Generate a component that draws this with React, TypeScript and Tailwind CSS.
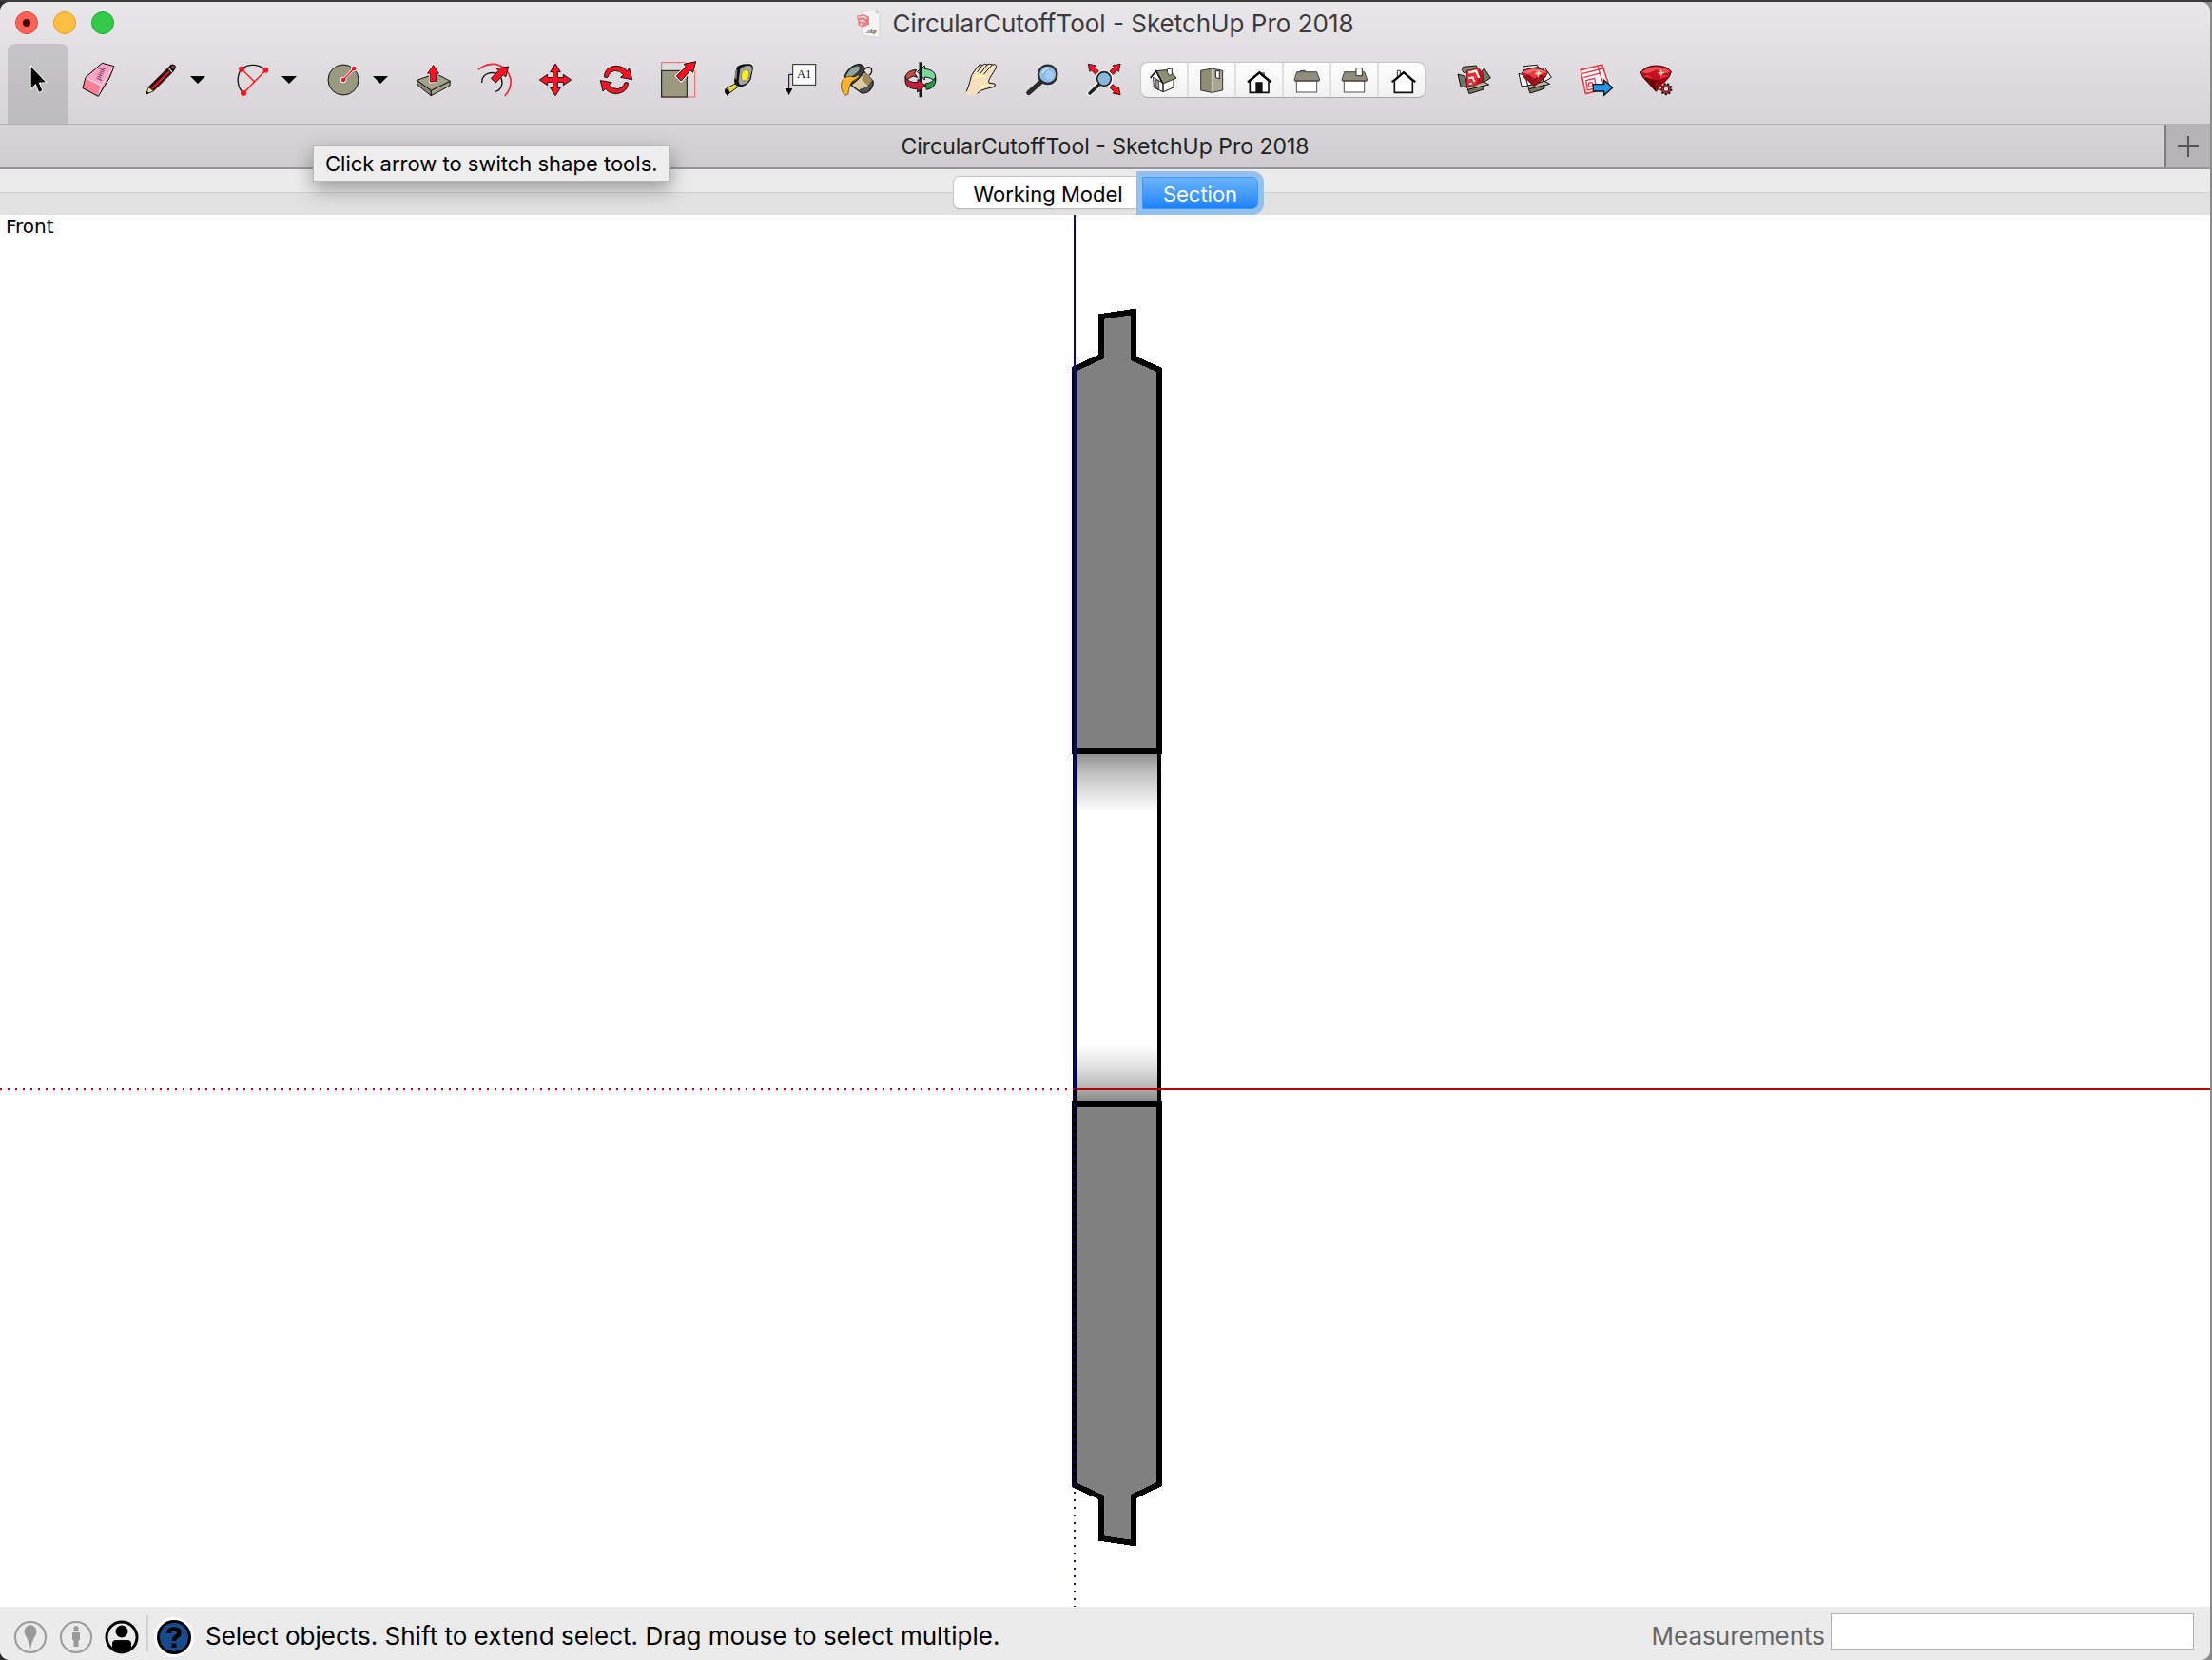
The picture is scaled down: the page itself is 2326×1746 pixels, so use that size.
import React from 'react';

type IconProps = { box: string; size?: string; children: React.ReactNode };

const Icon: React.FC<IconProps> = ({ box, size = 'h-10 w-10', children }) => (
    <svg viewBox={box} className={`${size} shrink-0`} aria-hidden="true">
        {children}
    </svg>
);

const HEAD = 'M0 -50 L17 -24 L9 -24 L9 0 L-9 0 L-9 -24 L-17 -24 Z';

const CursorIcon = () => (
    <Icon box="60 192 120 120">
        <path d="M98 211 V278 L113 264 L123 290 L133 286 L122 260 L144 259 Z" fill="#000" stroke="#fff" strokeWidth="5" paintOrder="stroke" />
    </Icon>
);

const EraserIcon = () => (
    <Icon box="252 192 120 120">
        <path d="M322 199 L360 209 L320 270 L270 246 Z" fill="#fba6c6" />
        <path d="M270 246 L320 270 L310 304 L261 278 Z" fill="#ff7f96" />
        <path d="M360 209 L345 246 L310 304 L320 270 Z" fill="#f9899f" />
        <path d="M270 246 L320 270 L360 209 M320 270 L311 302" fill="none" stroke="#fff" strokeWidth="3" />
        <path d="M322 199 L360 209 L345 246 L310 304 L261 278 L270 244 Z" fill="none" stroke="#000" strokeWidth="3" strokeLinejoin="round" />
        <text transform="translate(314 254) rotate(-63)" fontSize="24" fontFamily="Liberation Serif, serif" fill="#402040">pink</text>
    </Icon>
);

const PencilIcon = () => (
    <Icon box="444 192 120 120">
        <path d="M459 299 L468 274 L533 210 Q540 200 549 204 Q558 208 553 217 L548 225 L484 289 Z" fill="#111" />
        <path d="M462 295 L470 277 L483 287 Z" fill="#dfe3a8" />
        <path d="M459 299 L464 288 L470 294 Z" fill="#000" />
        <path d="M479 280 L534 226" stroke="#f5102a" strokeWidth="6" />
        <path d="M475 273 L529 219 M486 285 L541 231" stroke="#8d1420" strokeWidth="2" />
        <path d="M533 217 L543 227" stroke="#ddd" strokeWidth="4" />
        <circle cx="546" cy="212" r="5" fill="#b8374a" />
    </Icon>
);

const ArcIcon = () => (
    <Icon box="732 192 120 120">
        <path d="M768 294 A58 58 0 0 1 762 218 A58 58 0 0 1 838 221" fill="none" stroke="#111" strokeWidth="4" />
        <path d="M768 294 L838 221 M762 218 L803 258" stroke="#ff1024" strokeWidth="4" />
        <circle cx="762" cy="218" r="9" fill="#ff1024" />
        <circle cx="838" cy="221" r="9" fill="#ff1024" />
        <circle cx="768" cy="294" r="9" fill="#ff1024" />
    </Icon>
);

const CircleIcon = () => (
    <Icon box="1020 192 120 120">
        <circle cx="1083" cy="252" r="48" fill="#9b9980" stroke="#111" strokeWidth="3" />
        <path d="M1083 252 L1117 216" stroke="#fff" strokeWidth="8" />
        <circle cx="1083" cy="252" r="10" fill="#fff" />
        <circle cx="1117" cy="216" r="10" fill="#fff" />
        <path d="M1083 252 L1117 216" stroke="#ff1024" strokeWidth="4" />
        <circle cx="1083" cy="252" r="7" fill="#ff1024" />
        <circle cx="1117" cy="216" r="7" fill="#ff1024" />
    </Icon>
);

const PushPullIcon = () => (
    <Icon box="48 102 120 120">
        <g stroke="#111" strokeWidth="3" strokeLinejoin="round">
            <path d="M55 163 L100 196 L160 166 L116 142 Z" fill="#a3a18a" />
            <path d="M55 163 L100 196 V212 L57 178 Z" fill="#8c8a72" />
            <path d="M160 166 L100 196 V212 L159 180 Z" fill="#a3a18a" />
        </g>
        <path d="M107 115 L125 142 H116 V168 H97 V142 H88 Z" fill="#ff1024" stroke="#fff" strokeWidth="7" paintOrder="stroke" />
        <path d="M107 115 L125 142 H116 V168 H97 V142 H88 Z" fill="#ff1024" stroke="#111" strokeWidth="2" />
    </Icon>
);

const OffsetIcon = () => (
    <Icon box="240 102 120 120">
        <path d="M249 130 Q275 108 305 113 Q340 120 351 160 Q354 190 332 213" fill="none" stroke="#f5233b" strokeWidth="5" />
        <path d="M260 171 Q260 142 292 139 Q324 142 324 172 Q321 196 301 200" fill="none" stroke="#111" strokeWidth="4" />
        <path d="M344 120 L335 153 L328 146 L304 171 L289 157 L313 133 L307 126 Z" fill="#ff1024" stroke="#111" strokeWidth="3" />
    </Icon>
);

const MoveIcon = () => (
    <Icon box="432 102 120 120">
        <path
            d="M492 111 L508 137 H499 V155 H517 V145 L542 162 L517 179 V169 H499 V187 H508 L492 212 L476 187 H485 V169 H467 V179 L442 162 L467 145 V155 H485 V137 H476 Z"
            fill="#ff1024"
            stroke="#111"
            strokeWidth="3"
        />
    </Icon>
);

const RotateIcon = () => (
    <Icon box="624 102 120 120">
        <g fill="#ff1024" stroke="#111" strokeWidth="3" strokeLinejoin="round">
            <path d="M646 152 Q648 120 684 118 Q708 119 718 135 L725 125 L734 161 L698 154 L707 146 Q695 132 680 133 Q663 136 657 153 Q650 157 646 152 Z" />
            <path d="M722 172 Q719 203 684 206 Q660 204 650 190 L642 198 L634 164 L670 170 L661 178 Q672 191 688 191 Q705 188 711 171 Q718 168 722 172 Z" />
        </g>
    </Icon>
);

const ScaleIcon = () => (
    <Icon box="816 102 120 120">
        <rect x="827" y="107" width="105" height="109" fill="none" stroke="#f0616f" strokeWidth="3" />
        <rect x="827" y="133" width="80" height="83" fill="#9b9980" stroke="#111" strokeWidth="3" />
        <path d="M935 104 L926 139 L918 132 L889 165 L874 150 L904 120 L897 112 Z" fill="#ff1024" stroke="#fff" strokeWidth="8" paintOrder="stroke" />
        <path d="M935 104 L926 139 L918 132 L889 165 L874 150 L904 120 L897 112 Z" fill="#ff1024" stroke="#111" strokeWidth="3" />
    </Icon>
);

const TapeIcon = () => (
    <Icon box="1008 102 120 120">
        <path d="M1027 192 L1064 171 L1071 182 L1036 207 Z" fill="#e8dc2c" stroke="#111" strokeWidth="3" />
        <path d="M1026 194 L1038 190 L1042 203 L1034 212 L1027 203 Z" fill="#000" />
        <path d="M1064 122 Q1075 109 1105 112 Q1118 115 1115 130 L1109 160 Q1098 182 1076 184 Q1058 184 1056 165 Z" fill="#111" />
        <path d="M1075 128 Q1085 116 1104 117 Q1114 119 1112 132 L1105 160 Q1096 176 1080 178 Q1070 178 1070 165 Z" fill="#a4a4a4" />
        <path d="M1059 134 L1066 130 L1064 160 L1058 158 Z" fill="#777" />
        <ellipse cx="1091" cy="147" rx="12" ry="18" transform="rotate(18 1091 147)" fill="#ffee21" stroke="#777" strokeWidth="2" />
    </Icon>
);

const TextIcon = () => (
    <Icon box="60 192 120 120">
        <rect x="101" y="203" width="72" height="65" fill="#fff" stroke="#222" strokeWidth="3" />
        <text x="137" y="245" textAnchor="middle" fontSize="38" fontFamily="Liberation Serif, serif" fill="#111">A1</text>
        <path d="M101 235 H89 V282" fill="none" stroke="#000" strokeWidth="3" />
        <path d="M78 279 H100 L89 300 Z" fill="#000" />
    </Icon>
);

const PaintIcon = () => (
    <Icon box="252 192 120 120">
        <path d="M322 222 Q340 206 349 216 Q353 230 342 238" fill="none" stroke="#111" strokeWidth="4" />
        <path d="M327 227 L354 256 Q356 270 346 282 Q334 296 318 293 L284 268 Z" fill="#d9cda2" stroke="#111" strokeWidth="4" />
        <path d="M330 228 L354 256 L348 280 L318 251 Z" fill="#a2895d" />
        <path d="M313 282 Q335 282 353 254 Q356 270 344 284 Q334 296 318 294 Z" fill="#555" stroke="#111" strokeWidth="2" />
        <path d="M264 240 Q280 204 312 202 Q334 208 324 228 Q308 256 283 267 Q262 262 264 240 Z" fill="#3b3b3b" stroke="#111" strokeWidth="3" />
        <path d="M268 238 Q284 208 307 207 Q318 212 308 226 Q292 244 270 246 Z" fill="#90a69c" stroke="#111" strokeWidth="2" />
        <path d="M255 260 Q262 240 283 241 Q298 246 305 237 L312 240 Q300 252 288 257 Q279 268 275 298 Q266 305 260 294 Q250 278 255 260 Z" fill="#ffb52b" stroke="#3c2a00" strokeWidth="2" />
    </Icon>
);

const OrbitIcon = () => (
    <Icon box="444 192 120 120">
        <g stroke="#111" strokeWidth="3" strokeLinejoin="round">
            <path d="M456 242 Q462 222 491 220 L485 232 L494 244 L481 240 Q467 244 460 256 Z" fill="#c84a45" />
            <path d="M494 226 L517 207 V217 Q548 220 551 240 V258 Q540 244 517 243 V252 Z" fill="#7ad79a" />
            <path d="M551 243 V258 Q548 278 523 283 L519 264 Q542 262 551 243 Z" fill="#2b9a48" />
        </g>
        <path d="M504 196 V307" stroke="#1a1a1a" strokeWidth="9" />
        <path d="M456 242 Q464 262 495 260 V250 L519 270 L494 291 V281 Q458 280 456 258 Z" fill="#c41e3a" stroke="#111" strokeWidth="3" strokeLinejoin="round" />
    </Icon>
);

const PanIcon = () => (
    <Icon box="636 192 120 120">
        <path
            d="M648 291 Q656 273 660 256 Q663 236 673 225 L687 207 Q693 200 698 206 Q707 198 714 204 Q721 199 730 204 Q734 201 733 208 Q742 203 743 209 Q744 214 726 240 Q716 256 720 262 L738 264 Q744 271 732 275 L708 281 Q694 284 684 294 Q670 304 655 299 Q646 298 648 291 Z"
            fill="#f4dfbe"
        />
        <path d="M676 232 Q690 236 708 236 Q712 246 700 244 Q684 242 672 250 Z M690 276 Q704 258 716 268 Q712 278 690 282 Z" fill="#fbf6b6" />
        <path
            d="M649 288 Q656 273 660 256 Q663 236 673 225 L687 207 Q693 200 698 206 L684 226 M698 206 Q707 198 714 204 L694 230 M714 204 Q721 199 730 204 L704 234 M730 204 Q742 201 743 209 Q744 214 726 240 Q716 256 720 262 L738 264 Q744 271 732 275 L708 281 Q694 284 684 294"
            fill="none"
            stroke="#111"
            strokeWidth="3"
            strokeLinecap="round"
        />
    </Icon>
);

const ZoomIcon = () => (
    <Icon box="828 192 120 120">
        <path d="M845 293 L882 260" stroke="#2b2b2b" strokeWidth="15" strokeLinecap="round" />
        <circle cx="905" cy="235" r="29" fill="#8dbbe8" stroke="#2a2a2a" strokeWidth="7" />
        <circle cx="911" cy="237" r="14" fill="#a4cdf5" />
        <path d="M888 232 Q892 218 905 216" fill="none" stroke="#d5e8f8" strokeWidth="4" />
    </Icon>
);

const ZoomExtentsIcon = () => (
    <Icon box="1020 192 120 120">
        <g fill="#ff1024" stroke="#111" strokeWidth="3">
            <path d={HEAD} transform="translate(1061 230) rotate(-45) scale(0.8)" />
            <path d={HEAD} transform="translate(1106 230) rotate(45) scale(0.8)" />
            <path d={HEAD} transform="translate(1106 271) rotate(135) scale(0.8)" />
        </g>
        <path d="M1038 294 L1066 268" stroke="#fff" strokeWidth="17" strokeLinecap="round" />
        <circle cx="1083" cy="249" r="28" fill="#fff" />
        <path d="M1038 294 L1066 268" stroke="#222" strokeWidth="11" strokeLinecap="round" />
        <circle cx="1083" cy="249" r="22" fill="#8ab6da" stroke="#222" strokeWidth="5" />
    </Icon>
);

const BoxBase = ({ light }: { light?: boolean }) => (
    <g stroke="#111" strokeWidth="3" strokeLinejoin="round">
        <path d="M172 101 L176 91 L217 87 L222 98 L178 110 Z" fill={light ? '#f4f4f2' : '#8b8a76'} />
        <path d="M159 114 L182 121 L190 154 L168 154 Z" fill={light ? '#f4f4f2' : '#77765f'} />
        <path d="M232 108 L242 96 L262 126 L240 140 Z" fill={light ? '#f4f4f2' : '#77765f'} />
        <path d="M184 153 L240 138 L257 147 L194 164 Z" fill="#b5b39d" />
        <path d="M190 163 L240 151 V162 L195 176 Z" fill="#77765f" />
        {light && <path d="M174 103 L221 93 L240 138 L188 152 Z" fill="#fff" />}
    </g>
);

const WarehouseIcon = () => (
    <Icon box="150 72 120 120">
        <BoxBase />
        <path d="M187 103 L224 95 L238 112 L238 136 L212 150 L187 152 Z" fill="#ee2a36" stroke="#8b0d16" strokeWidth="3" />
        <path d="M226 98 L238 112 V136 L218 146 Z" fill="#b3111f" />
        <path d="M193 109 L216 104 L226 126" fill="none" stroke="#fff" strokeWidth="7" />
        <path d="M193 127 L206 124 L211 138 M195 145 L203 143" fill="none" stroke="#fff" strokeWidth="6" />
    </Icon>
);

const ExtensionIcon = () => (
    <Icon box="342 72 120 120">
        <g transform="translate(192 -2)">
            <BoxBase light />
        </g>
        <path d="M361 109 Q372 97 400 96 Q430 96 442 109 L434 124 L400 152 L368 124 Z" fill="#dc1422" stroke="#4e0008" strokeWidth="3" />
        <path d="M362 108 Q400 86 441 108 L422 114 L400 105 L380 114 Z" fill="#f16b6f" />
        <path d="M368 124 L380 114 L400 128 L422 114 L434 124 L400 152 Z" fill="#98101b" />
        <path d="M380 114 L400 105 L422 114 L400 128 Z" fill="#e63a42" />
        <path d="M412 100 L416 109 L424 112 L416 116 L412 126 L409 116 L400 112 L409 109 Z" fill="#fbd5b4" />
    </Icon>
);

const LayoutIcon = () => (
    <Icon box="534 72 120 120">
        <path d="M541 99 L616 79 L645 152 L559 181 Z" fill="#fff" />
        <path d="M546 101 L614 84 L638 156 L562 176 Z" fill="#fff" stroke="#ee3440" strokeWidth="5" />
        <path d="M552 112 L616 96 M600 90 L620 150" stroke="#ee3440" strokeWidth="4" />
        <path d="M556 124 L612 110" stroke="#ee3440" strokeWidth="4" />
        <path d="M563 134 L590 127 L596 158 L568 165 Z" fill="#fff" stroke="#ee3440" strokeWidth="4" />
        <circle cx="578" cy="147" r="7" fill="#fff" stroke="#ee3440" strokeWidth="4" />
        <path d="M586 146 H620 V133 L647 157 L620 181 V168 H586 Z" fill="#2196f3" stroke="#111" strokeWidth="4" />
    </Icon>
);

const RubyIcon = () => (
    <Icon box="726 72 120 120">
        <path d="M736 108 Q750 88 784 87 Q820 88 832 106 L826 122 L784 169 L742 122 Z" fill="#c9121f" stroke="#2c0004" strokeWidth="3" />
        <path d="M738 108 Q784 74 830 106 L810 112 L785 100 L758 112 Z" fill="#ee4e55" />
        <path d="M742 121 L758 112 L784 128 L810 112 L827 120 L785 134 Z" fill="#f0222f" />
        <path d="M742 122 L784 132 L784 168 Z" fill="#6c0009" />
        <path d="M826 122 L784 132 L784 168 Z" fill="#99000d" />
        <path d="M742 121 L758 112 L784 130 L810 112 L827 120" fill="none" stroke="#5a0007" strokeWidth="2" />
        <path d="M799 98 L804 107 L812 110 L804 114 L800 123 L797 114 L788 110 L797 107 Z" fill="#f8c7a0" />
        <circle cx="816" cy="161" r="20" fill="#dedde0" />
        <circle cx="816" cy="161" r="16" fill="none" stroke="#111" strokeWidth="7" strokeDasharray="6 5" />
        <circle cx="816" cy="161" r="11" fill="#dedde0" stroke="#111" strokeWidth="9" />
        <circle cx="816" cy="161" r="11" fill="none" stroke="#e3222f" strokeWidth="5" />
    </Icon>
);

const view = 'h-9 w-9';

const IsoIcon = () => (
    <Icon box="78 198 108 108" size={view}>
        <path d="M98 244 L129 262 V290 L100 276 Z M129 262 L162 244 V276 L129 290 Z" fill="#fff" stroke="#222" strokeWidth="3" />
        <path d="M105 252 L116 257 V282 L105 277 Z" fill="#999" stroke="#111" strokeWidth="2" />
        <path d="M107 224 L148 220 L171 246 L128 264 Z" fill="#8f8d74" stroke="#222" strokeWidth="3" />
        <path d="M89 246 L107 224 L128 263" fill="none" stroke="#111" strokeWidth="5" />
        <path d="M142 218 L157 216 V236 L149 238 L142 229 Z" fill="#fff" stroke="#333" strokeWidth="3" />
    </Icon>
);

const TopIcon = () => (
    <Icon box="231 198 108 108" size={view}>
        <path d="M251 223 L286 216 V292 L251 285 Z" fill="#8f8d74" />
        <path d="M286 216 L320 223 V285 L286 292 Z" fill="#a9a791" />
        <path d="M286 217 V291" stroke="#c9c7b4" strokeWidth="3" />
        <path d="M251 223 L286 216 L320 223 V285 L286 292 L251 285 Z" fill="none" stroke="#333" strokeWidth="3" />
        <path d="M298 224 H310 V249 L298 244 Z" fill="#fff" stroke="#222" strokeWidth="3" />
    </Icon>
);

const FrontIcon = () => (
    <Icon box="381 198 108 108" size={view}>
        <path d="M442 230 H451 V240 L442 236 Z" fill="#888" stroke="#222" strokeWidth="2" />
        <path d="M436 230 L465 255 V292 H406 V255 Z" fill="#fff" stroke="#111" strokeWidth="5" />
        <path d="M424 292 V259 H446 V292 Z" fill="#111" />
        <path d="M399 259 L436 229 L473 259" fill="none" stroke="#000" strokeWidth="7" />
    </Icon>
);

const SideHouse = ({ chimney }: { chimney: React.ReactNode }) => (
    <>
        <rect x="553" y="254" width="64" height="37" fill="#fff" stroke="#555" strokeWidth="3" />
        <path d="M554 227 H617 L626 252 Q626 255 622 255 H550 Q546 255 546 252 Z" fill="#8f8d7b" stroke="#444" strokeWidth="3" />
        <path d="M548 255 H624" stroke="#5d3a38" strokeWidth="3" />
        {chimney}
    </>
);

const RightIcon = () => (
    <Icon box="531 198 108 108" size={view}>
        <SideHouse chimney={<path d="M566 226 V223 H580 V226" fill="#aaa" stroke="#333" strokeWidth="3" />} />
    </Icon>
);

const LeftIcon = () => (
    <Icon box="531 198 108 108" size={view}>
        <SideHouse chimney={<rect x="591" y="215" width="19" height="24" fill="#fff" stroke="#333" strokeWidth="3" />} />
    </Icon>
);

const BackIcon = () => (
    <Icon box="831 198 108 108" size={view}>
        <path d="M871 240 V223 H880 V236" fill="#fff" stroke="#333" strokeWidth="3" />
        <path d="M891 229 L919 255 V292 H862 V255 Z" fill="#fff" stroke="#111" strokeWidth="5" />
        <path d="M854 259 L891 228 L928 259" fill="none" stroke="#000" strokeWidth="6" />
    </Icon>
);

const tools: { label: string; icon: React.FC; menu?: boolean; active?: boolean }[] = [
    { label: 'Select', icon: CursorIcon, active: true },
    { label: 'Eraser', icon: EraserIcon },
    { label: 'Lines', icon: PencilIcon, menu: true },
    { label: 'Arcs', icon: ArcIcon, menu: true },
    { label: 'Shapes', icon: CircleIcon, menu: true },
    { label: 'Push/Pull', icon: PushPullIcon },
    { label: 'Offset', icon: OffsetIcon },
    { label: 'Move', icon: MoveIcon },
    { label: 'Rotate', icon: RotateIcon },
    { label: 'Scale', icon: ScaleIcon },
    { label: 'Tape Measure', icon: TapeIcon },
    { label: 'Text', icon: TextIcon },
    { label: 'Paint Bucket', icon: PaintIcon },
    { label: 'Orbit', icon: OrbitIcon },
    { label: 'Pan', icon: PanIcon },
    { label: 'Zoom', icon: ZoomIcon },
    { label: 'Zoom Extents', icon: ZoomExtentsIcon },
];

const views: { label: string; icon: React.FC }[] = [
    { label: 'Iso', icon: IsoIcon },
    { label: 'Top', icon: TopIcon },
    { label: 'Front', icon: FrontIcon },
    { label: 'Right', icon: RightIcon },
    { label: 'Left', icon: LeftIcon },
    { label: 'Back', icon: BackIcon },
];

const extras: { label: string; icon: React.FC }[] = [
    { label: '3D Warehouse', icon: WarehouseIcon },
    { label: 'Extension Warehouse', icon: ExtensionIcon },
    { label: 'Send to LayOut', icon: LayoutIcon },
    { label: 'Extension Manager', icon: RubyIcon },
];

const TitleBar = () => (
    <header className="grid h-11 grid-cols-[1fr_auto_1fr] items-center px-4">
        <div className="flex gap-4">
            <button aria-label="Close" className="flex h-6 w-6 items-center justify-center rounded-full border border-[#e2463f] bg-[#fc615c]">
                <span className="h-2 w-2 rounded-full bg-[#4d0000]" />
            </button>
            <button aria-label="Minimize" className="h-6 w-6 rounded-full border border-[#dfa023] bg-[#fdbe41]" />
            <button aria-label="Zoom window" className="h-6 w-6 rounded-full border border-[#1dac2b] bg-[#34c84a]" />
        </div>
        <h1 className="flex items-center gap-3 pt-0.5 text-[26px] leading-8 text-[#3c3a3c]">
            <svg viewBox="296 26 78 92" className="h-8 w-[26px]" aria-hidden="true">
                <path d="M316 32 L358 28 L371 40 V116 L316 109 Z" fill="#f4f4f4" stroke="#c6c6c6" strokeWidth="2" />
                <path d="M358 28 V39 L371 40 Z" fill="#ccc" />
                <path d="M298 47 L320 42 L338 50 V74 L318 83 L303 76 V66 Z" fill="#e88185" />
                <path d="M303 52 L321 49 L331 56 M308 63 L318 61 L325 66 M309 74 L316 72" fill="none" stroke="#fbe6e6" strokeWidth="4" />
                <text x="328" y="102" fontSize="20" fontWeight="bold" fontStyle="italic" fontFamily="Liberation Serif, serif" fill="#555">.skp</text>
            </svg>
            CircularCutoffTool - SketchUp Pro 2018
        </h1>
        <span />
    </header>
);

const Toolbar = () => (
    <div role="toolbar" aria-label="Tools" className="flex h-[84px] items-stretch pl-2">
        {tools.map(({ label, icon: ToolIcon, menu, active }) => (
            <div key={label} className="flex">
                <button
                    aria-label={label}
                    className={active ? 'flex w-16 items-center justify-center rounded-t-lg bg-black/12 pb-2' : 'flex w-16 items-center justify-center pb-2'}
                >
                    <ToolIcon />
                </button>
                {menu && (
                    <button aria-label={`${label} menu`} className="flex w-8 items-center pb-2">
                        <svg viewBox="0 0 16 16" className="h-4 w-4" aria-hidden="true">
                            <path d="M0 4 H16 L8 12 Z" fill="#000" />
                        </svg>
                    </button>
                )}
            </div>
        ))}
        <div className="flex items-center pb-2 pl-[7px] pr-[19px]">
            <div className="flex h-[38px] divide-x-2 divide-[#e0e0e0] overflow-hidden rounded-lg border border-[#c8c6c8] border-b-[#a8a6a8] bg-gradient-to-b from-white to-[#f1f1f1]">
                {views.map(({ label, icon: ViewIcon }) => (
                    <button key={label} aria-label={label} className="flex w-[50px] items-center justify-center last:w-12">
                        <ViewIcon />
                    </button>
                ))}
            </div>
        </div>
        {extras.map(({ label, icon: ExtraIcon }) => (
            <button key={label} aria-label={label} className="flex w-16 items-center justify-center pb-2">
                <ExtraIcon />
            </button>
        ))}
    </div>
);

const TabBar = () => (
    <div className="flex h-12 border-y-2 border-t-[#b3b1b4] border-b-[#999799] bg-gradient-to-b from-[#d6d4d7] to-[#cfcdd0]">
        <button className="flex-1 pl-12 text-center text-[23px] leading-7 text-[#222]">CircularCutoffTool - SketchUp Pro 2018</button>
        <button aria-label="New tab" className="flex w-12 items-center justify-center border-l-2 border-[#7f7d80] bg-[#b5b3b6]">
            <svg viewBox="0 0 22 22" className="h-[22px] w-[22px]" aria-hidden="true">
                <path d="M11 0 V22 M0 11 H22" stroke="#555355" strokeWidth="2" />
            </svg>
        </button>
    </div>
);

const SceneBar = () => (
    <div className="flex h-12 justify-center bg-[linear-gradient(#ebebeb_24px,#d0d0d0_24px,#d0d0d0_25px,#e1e1e1_25px)] py-2 pl-0.5">
        <div className="flex text-[22px] leading-7">
            <button className="h-[33px] w-[198px] rounded-l-md bg-white pt-0.5 text-center text-black shadow-[0_0_1px_1px_#c4c4c4,0_1px_1px_#999]">Working Model</button>
            <button className="relative h-[34px] w-[122px] rounded-r-md border border-[#3a97f5] bg-gradient-to-b from-[#6bb3fa] to-[#1a82fd] pt-0.5 text-center text-white shadow-[0_0_0_6px_#93c0ee]">
                Section
            </button>
        </div>
    </div>
);

const Model = () => (
    <svg viewBox="0 226 2324 1464" preserveAspectRatio="xMidYMid slice" className="absolute inset-0 h-full w-full" role="img" aria-label="Section of the wheel" shapeRendering="crispEdges">
        <defs>
            <linearGradient id="bore" x1="0" y1="793" x2="0" y2="1158" gradientUnits="userSpaceOnUse">
                <stop offset="0" stopColor="#8e8e8e" />
                <stop offset="0.05" stopColor="#bdbdbd" />
                <stop offset="0.11" stopColor="#e0e0e0" />
                <stop offset="0.17" stopColor="#fff" />
                <stop offset="0.84" stopColor="#fff" />
                <stop offset="0.91" stopColor="#dcdcdc" />
                <stop offset="0.96" stopColor="#b6b6b6" />
                <stop offset="1" stopColor="#8a8a8a" />
            </linearGradient>
        </defs>
        <rect x="1130" y="790" width="89" height="371" fill="url(#bore)" />
        <path d="M1130 790 V1161 M1219 790 V1161" stroke="#000" strokeWidth="4" />
        <g fill="#808080" stroke="#000" strokeWidth="6">
            <path d="M1130 790 V388 L1158 375 V333 L1192 328 V377 L1219 389 V790 Z" />
            <path d="M1130 1161 V1562 L1158 1575 V1618 L1192 1623 V1574 L1219 1561 V1161 Z" />
        </g>
        <path d="M1130 226 V1146" stroke="#0000ae" strokeWidth="2" />
        <path d="M1130 1153 V1690" stroke="#0000ae" strokeWidth="2" strokeDasharray="2 6" />
        <path d="M1131 1145 H2324" stroke="#b40000" strokeWidth="2" />
        <path d="M1130 1145 H0" stroke="#b40000" strokeWidth="2" strokeDasharray="2 6" />
    </svg>
);

const StatusBar = () => (
    <footer className="flex h-14 items-center bg-[#ebebeb] pl-3.5 pr-[17px] text-[26px] leading-8">
        <div className="mt-2 flex items-center gap-3">
            <button aria-label="Geo-location">
                <svg viewBox="0 0 36 36" className="h-9 w-9" aria-hidden="true">
                    <circle cx="18" cy="18" r="16" fill="none" stroke="#999" strokeWidth="2" />
                    <path d="M18 31 Q17 23 12 15 A6.500 7 0 1 1 24 15 Q19 23 18 31 Z" fill="#999" />
                </svg>
            </button>
            <button aria-label="Credits">
                <svg viewBox="0 0 36 36" className="h-9 w-9" aria-hidden="true">
                    <circle cx="18" cy="18" r="16" fill="none" stroke="#999" strokeWidth="2" />
                    <circle cx="18" cy="9" r="2.700" fill="#999" />
                    <path d="M15 13 H21 Q22 13 22 14 V21 H20.500 V28 H15.500 V21 H14 V14 Q14 13 15 13 Z" fill="#999" />
                </svg>
            </button>
            <button aria-label="Sign in">
                <svg viewBox="0 0 36 36" className="h-9 w-9" aria-hidden="true">
                    <circle cx="18" cy="18" r="16" fill="none" stroke="#000" strokeWidth="3" />
                    <circle cx="18" cy="12" r="6.500" fill="#000" />
                    <path d="M8 30 V25 Q8 21 12 21 H24 Q28 21 28 25 V30 Q18 38 8 30 Z" fill="#000" />
                </svg>
            </button>
        </div>
        <div className="ml-2 h-[38px] w-0.5 bg-[#d0d0d0]" />
        <button aria-label="Help" className="ml-1.5 mt-2">
            <svg viewBox="0 0 42 42" className="h-[42px] w-[42px]" aria-hidden="true">
                <circle cx="21" cy="21" r="21" fill="#fff" />
                <circle cx="21" cy="21" r="16.500" fill="#194a8c" stroke="#000" strokeWidth="3" />
                <path d="M15.500 17 Q15.500 12.500 21 12.500 Q26.500 12.500 26.500 16.500 Q26.500 19 23.500 20.500 Q21 22 21 25" fill="none" stroke="#000" strokeWidth="4.500" />
                <rect x="18.500" y="27.500" width="5" height="4.500" fill="#000" />
            </svg>
        </button>
        <p className="ml-3 mt-1.5 text-black">Select objects. Shift to extend select. Drag mouse to select multiple.</p>
        <label htmlFor="measurements" className="ml-auto mt-1.5 pr-1.5 text-[#666]">
            Measurements
        </label>
        <input id="measurements" type="text" className="mb-1 h-[38px] w-[382px] border border-[#b0b0b0] bg-white px-2 outline-none" />
    </footer>
);

export default function App() {
    return (
        <div className="h-screen bg-[#3a3a3a] pt-0.5 font-[Inter,'Liberation_Sans',sans-serif]">
            <div className="h-full bg-gradient-to-r from-[#2b2b2b] to-[#8a8a8a] pr-0.5">
                <div className="relative flex h-full flex-col overflow-hidden rounded-[10px] bg-white">
                    <div className="bg-gradient-to-b from-[#e9e7ea] to-[#d6d4d7]">
                        <TitleBar />
                        <Toolbar />
                    </div>
                    <TabBar />
                    <SceneBar />
                    <main className="relative min-h-0 flex-1 overflow-hidden bg-white">
                        <Model />
                        <p className="relative px-1.5 font-['DejaVu_Sans',sans-serif] text-xl leading-6 text-black">Front</p>
                    </main>
                    <StatusBar />
                    <div role="tooltip" className="absolute left-[329px] top-[151px] border border-[#b8b8b8] bg-[#eeeeee] px-3 py-1 text-[22px] leading-7 text-black shadow-[0_8px_20px_rgba(0,0,0,0.35)]">
                        Click arrow to switch shape tools.
                    </div>
                </div>
            </div>
        </div>
    );
}
